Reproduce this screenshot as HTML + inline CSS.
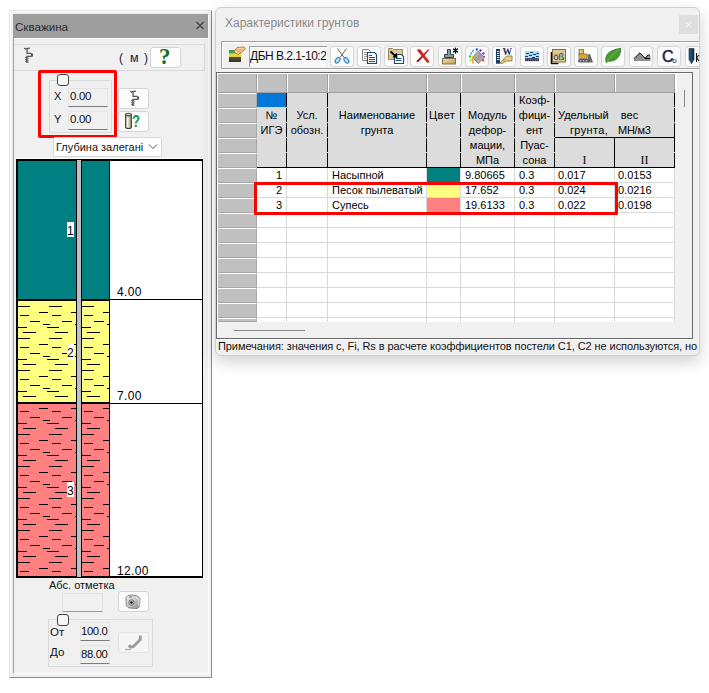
<!DOCTYPE html>
<html><head><meta charset="utf-8">
<style>
*{box-sizing:border-box;margin:0;padding:0}
html,body{width:709px;height:693px;overflow:hidden;background:#fff}
body{position:relative;font-family:"Liberation Sans",sans-serif;font-size:11px;color:#000}
.a{position:absolute}
.t{position:absolute;white-space:nowrap;line-height:13px}
.hd{position:absolute;height:15px;line-height:15px;text-align:center;white-space:nowrap;font-size:11px;color:#000}
.dt{position:absolute;height:15px;line-height:15px;white-space:nowrap;font-size:11px;color:#000}
.vb{width:1px;background:repeating-linear-gradient(to bottom,#000 0,#000 14px,transparent 14px,transparent 15px)}
</style></head><body>

<!-- ============ LEFT PANEL ============ -->
<div class="a" style="left:9px;top:10px;width:203px;height:668px;background:#f0f0f0;border-left:1px solid #e3e3e3;border-top:1px solid #e3e3e3;border-right:1px solid #8c8c8c;border-bottom:1px solid #8c8c8c"></div>
<div class="a" style="left:10px;top:11px;width:201px;height:666px;border-left:1px solid #fff;border-top:1px solid #fff"></div>
<div class="a" style="left:13px;top:14px;width:196px;height:660px;border-left:1px solid #a0a0a0;border-top:1px solid #a0a0a0;border-right:1px solid #fff;border-bottom:1px solid #fff"></div>
<!-- title bar -->
<div class="a" style="left:13px;top:14px;width:195px;height:24px;background:#9e9e9e"></div>
<div class="t" style="left:15px;top:20px;font-size:11.6px;color:#2a2a2a">Скважина</div>
<svg class="a" style="left:194px;top:20px" width="12" height="11" viewBox="194 20 12 11"><path d="M196.5 22 L203.5 29 M203.5 22 L196.5 29" stroke="#404040" stroke-width="1.15"/></svg>

<!-- top strip -->
<div class="a" style="left:14px;top:38px;width:194px;height:1px;background:#fafafa"></div>
<!-- icon section -->
<div class="a" style="left:14px;top:44px;width:191px;height:27px;border:1px solid #dadada;border-left:none"></div>
<svg class="a" style="left:23px;top:46px" width="12" height="18" viewBox="0 0 12 18">
 <path d="M1.2 2.1 L3.2 3.6 M3 2.7 L7 2.2 M4.1 2.6 V7.4 H8.3 M3.4 10.4 H8.6 M3.8 10.4 V17" stroke="#585858" stroke-width="1.3" fill="none"/>
 <path d="M9 7.4 V10.4" stroke="#444" stroke-width="1.8"/>
 <path d="M2.2 11.2 L5.6 12.3 M2.2 13.2 L5.6 14.3 M2.2 15.2 L5.6 16.3" stroke="#585858" stroke-width="1.2"/>
</svg>
<div class="t" style="left:119px;top:52px;font-size:12px;color:#1a1a3a">(</div><div class="t" style="left:130px;top:52px;font-size:12.5px;color:#1a1a3a">м</div><div class="t" style="left:144px;top:52px;font-size:12px;color:#1a1a3a">)</div>
<div class="a" style="left:150px;top:47px;width:31px;height:21px;background:#fdfdfd;border:1px solid #d4d4d4;border-radius:3px"></div>
<div class="t" style="left:159px;top:45px;font-family:'Liberation Serif',serif;font-weight:bold;font-size:23px;color:#1f6e24;line-height:23px">?</div>

<!-- XY group (red) -->
<div class="a" style="left:49px;top:80px;width:63px;height:53px;border:1px solid #dadada"></div>
<div class="a" style="left:57px;top:74px;width:12px;height:12px;border:1px solid #444;border-radius:3px;background:#f6f6f6"></div>
<div class="t" style="left:54px;top:90px;font-size:11px;color:#111">X</div>
<div class="a" style="left:68px;top:88px;width:40px;height:19px;background:#f0f0f0;border:1px solid #e4e4e4;border-bottom:1px solid #7a7a7a"></div>
<div class="t" style="left:70px;top:90px;font-size:11.5px;letter-spacing:-0.3px;color:#111">0.00</div>
<div class="t" style="left:54px;top:113px;font-size:11px;color:#111">Y</div>
<div class="a" style="left:68px;top:111px;width:40px;height:19px;background:#f0f0f0;border:1px solid #e4e4e4;border-bottom:1px solid #7a7a7a"></div>
<div class="t" style="left:70px;top:113px;font-size:11.5px;letter-spacing:-0.3px;color:#111">0.00</div>
<div class="a" style="left:38px;top:70px;width:79px;height:68px;border:3px solid #ff0000;border-radius:2px"></div>

<!-- drill button -->
<div class="a" style="left:118px;top:88px;width:31px;height:21px;background:#fbfbfb;border:1px solid #d4d4d4;border-radius:3px"></div>
<svg class="a" style="left:129px;top:89px" width="12" height="18" viewBox="0 0 12 18">
 <path d="M1.2 2.1 L3.2 3.6 M3 2.7 L7 2.2 M4.1 2.6 V7.4 H8.3 M3.4 10.4 H8.6 M3.8 10.4 V17" stroke="#585858" stroke-width="1.3" fill="none"/>
 <path d="M9 7.4 V10.4" stroke="#444" stroke-width="1.8"/>
 <path d="M2.2 11.2 L5.6 12.3 M2.2 13.2 L5.6 14.3 M2.2 15.2 L5.6 16.3" stroke="#585858" stroke-width="1.2"/>
</svg>
<!-- cylinder ? button -->
<div class="a" style="left:118px;top:111px;width:31px;height:21px;background:#fbfbfb;border:1px solid #d4d4d4;border-radius:3px"></div>
<svg class="a" style="left:118px;top:108px" width="20" height="24" viewBox="118 108 20 24">
 <defs><linearGradient id="cyl" x1="0" x2="1"><stop offset="0" stop-color="#d8d2c0"/><stop offset="0.35" stop-color="#f4f0e0"/><stop offset="1" stop-color="#9a9488"/></linearGradient></defs>
 <path d="M125.6 114.8 V127.2 A2.85 1.3 0 0 0 131.3 127.2 V114.8" fill="url(#cyl)" stroke="#4a4242" stroke-width="1.2"/>
 <ellipse cx="128.45" cy="114.6" rx="2.85" ry="1.3" fill="#e8e2d2" stroke="#4a4242" stroke-width="1.1"/>
</svg>
<div class="t" style="left:132px;top:113px;font-size:16px;font-weight:bold;color:#17963e;line-height:17px;transform:scaleX(0.82);transform-origin:0 0">?</div>

<!-- dropdown -->
<div class="a" style="left:53px;top:137px;width:109px;height:20px;background:#fff;border:1px solid #d9d9d9;border-radius:2px"></div>
<div class="t" style="left:56px;top:141px;font-size:11px;color:#111">Глубина залегані</div>
<svg class="a" style="left:148px;top:144px" width="10" height="6" viewBox="0 0 10 6"><path d="M1 0.5 L5 4.5 L9 0.5" stroke="#555" stroke-width="1" fill="none"/></svg>

<!-- chart -->
<div class="a" style="left:16px;top:158px;width:188px;height:1px;background:#fff"></div>
<svg class="a" style="left:16px;top:159px" width="188" height="420" viewBox="16 159 188 420" shape-rendering="crispEdges">
 <defs>
  <pattern id="hatch" patternUnits="userSpaceOnUse" x="0" y="0" width="32" height="32">
   <rect x="17" y="18" width="13" height="1" fill="#000"/>
   <rect x="7" y="24" width="9" height="1" fill="#000"/>
   <rect x="20" y="27" width="9" height="1" fill="#000"/>
   <rect x="30" y="1" width="2" height="1" fill="#000"/>
   <rect x="0" y="1" width="8" height="1" fill="#000"/>
   <rect x="11" y="4" width="7" height="1" fill="#000"/>
   <rect x="15" y="7" width="12" height="1" fill="#000"/>
   <rect x="23" y="12" width="9" height="1" fill="#000"/>
   <rect x="0" y="12" width="4" height="1" fill="#000"/>
  </pattern>
 </defs>
 <rect x="16" y="159" width="187" height="419" fill="#000"/>
 <rect x="18" y="161" width="184" height="415" fill="#fff"/>
 <!-- layer 1 -->
 <rect x="18" y="161" width="91" height="138" fill="#008080"/>
 <!-- layer 2 -->
 <rect x="18" y="301" width="91" height="101" fill="#ffff80"/>
 <rect x="18" y="301" width="91" height="101" fill="url(#hatch)"/>
 <!-- layer 3 -->
 <rect x="18" y="404" width="91" height="172" fill="#ff8080"/>
 <rect x="18" y="404" width="91" height="172" fill="url(#hatch)"/>
 <!-- boundaries -->
 <rect x="18" y="299" width="91" height="2" fill="#000"/>
 <rect x="109" y="299" width="93" height="1" fill="#000"/>
 <rect x="18" y="402" width="91" height="2" fill="#000"/>
 <rect x="109" y="403" width="93" height="1" fill="#000"/>
 <!-- right black edge of columns -->
 <rect x="109" y="161" width="1" height="415" fill="#000"/>
 <!-- core -->
 <rect x="76" y="160" width="6" height="417" fill="#000"/>
 <rect x="77" y="160" width="4" height="417" fill="#c0c0c0"/>
 <!-- labels -->
 <rect x="67" y="222" width="7" height="15" fill="#fff"/>
 <rect x="67" y="344" width="7" height="15" fill="#fff"/>
 <rect x="67" y="482" width="7" height="15" fill="#fff"/>
</svg>
<div class="t" style="left:67px;top:225px;font-size:12px;color:#000">1</div>
<div class="t" style="left:67px;top:347px;font-size:12px;color:#000">2</div>
<div class="t" style="left:67px;top:485px;font-size:12px;color:#000">3</div>
<div class="t" style="left:117px;top:286px;font-size:12px;letter-spacing:0.35px;color:#000">4.00</div>
<div class="t" style="left:117px;top:390px;font-size:12px;letter-spacing:0.35px;color:#000">7.00</div>
<div class="t" style="left:117px;top:565px;font-size:12px;letter-spacing:0.35px;color:#000">12.00</div>

<!-- bottom controls -->
<div class="t" style="left:49px;top:579px;font-size:11px;color:#111">Абс. отметка</div>
<div class="a" style="left:62px;top:593px;width:41px;height:19px;background:#f0f0f0;border:1px solid #e2e2e2;border-bottom:1px solid #9a9a9a"></div>
<div class="a" style="left:118px;top:591px;width:31px;height:21px;background:#fbfbfb;border:1px solid #d4d4d4;border-radius:3px"></div>
<svg class="a" style="left:122px;top:592px" width="22" height="19" viewBox="122 592 22 19">
 <defs><linearGradient id="camg" x1="0" y1="0" x2="1" y2="1"><stop offset="0" stop-color="#f4f4f4"/><stop offset="0.5" stop-color="#c8c8c8"/><stop offset="1" stop-color="#8a8a8a"/></linearGradient></defs>
 <path d="M126 597.5 L128 595.5 L132 595 L137.5 596 L140 598.5 L139.5 606.5 L137 608.5 L129 608 L126.3 605.5 Z" fill="url(#camg)" stroke="#7a7a7a" stroke-width="0.9"/>
 <path d="M136 597 L139 599 V606" stroke="#fff" stroke-width="0.8" fill="none"/>
 <rect x="129" y="596" width="3" height="2" fill="#a8a8a8"/>
 <circle cx="131.5" cy="602.5" r="2.7" fill="#dcdcdc" stroke="#5a5a5a" stroke-width="0.9"/>
 <circle cx="131.5" cy="602.5" r="1.3" fill="#111"/>
</svg>
<div class="a" style="left:48px;top:619px;width:105px;height:48px;border:1px solid #dadada"></div>
<div class="a" style="left:57px;top:614px;width:12px;height:12px;border:1px solid #444;border-radius:3px;background:#f6f6f6"></div>
<div class="t" style="left:50px;top:626px;font-size:11.5px;color:#111">От</div>
<div class="a" style="left:80px;top:622px;width:30px;height:19px;background:#f0f0f0;border:1px solid #e4e4e4;border-bottom:1px solid #7a7a7a"></div>
<div class="t" style="left:81px;top:625px;font-size:11.3px;color:#111;letter-spacing:-0.35px;width:28px;overflow:hidden">100.0</div>
<div class="t" style="left:50px;top:646px;font-size:11.5px;color:#111">До</div>
<div class="a" style="left:80px;top:645px;width:30px;height:19px;background:#f0f0f0;border:1px solid #e4e4e4;border-bottom:1px solid #7a7a7a"></div>
<div class="t" style="left:81px;top:648px;font-size:11.3px;color:#111;letter-spacing:-0.35px;width:28px;overflow:hidden">88.00</div>
<div class="a" style="left:118px;top:632px;width:31px;height:21px;background:#f5f5f5;border:1px solid #e4e4e4;border-radius:3px"></div>
<svg class="a" style="left:122px;top:633px" width="22" height="19" viewBox="122 633 22 19">
 <path d="M140.3 635.5 V639.5 L133.5 646.5 L130.5 647 L128.8 645.2" stroke="#9c9c9c" stroke-width="2.8" fill="none" stroke-linejoin="round"/>
 <path d="M125 649.5 H131 M126 648.5 V650.5 M128 648.5 V650.5 M130 648.5 V650.5" stroke="#a8a8a8" stroke-width="0.8"/>
</svg>

<!-- ============ RIGHT WINDOW ============ -->
<div class="a" style="left:215px;top:7px;width:485px;height:349px;background:#f0f0f0;border:1px solid #cfcfcf;border-radius:6px;box-shadow:0 6px 16px rgba(0,0,0,0.18)"></div>
<div class="t" style="left:225px;top:16px;font-size:12px;color:#8a8a8a;line-height:14px">Характеристики грунтов</div>
<div class="a" style="left:679px;top:15px;width:19px;height:19px;background:#dedede"></div>
<svg class="a" style="left:684px;top:20px" width="9" height="9" viewBox="684 20 9 9"><path d="M686 22.3 L691 27.3 M691 22.3 L686 27.3" stroke="#fbfbfb" stroke-width="1"/></svg>
<!-- toolbar -->
<div class="a" style="left:221px;top:41px;width:478px;height:28px;border-top:1px solid #a0a0a0;border-left:1px solid #a0a0a0;border-bottom:1px solid #a0a0a0;box-shadow:inset 1px 1px 0 #fff"></div>
<div class="a" style="left:221px;top:69px;width:478px;height:1px;background:#fff"></div>
<svg class="a" style="left:221px;top:41px" width="478" height="28" viewBox="221 41 478 28">
 <defs>
  <linearGradient id="gTan" x1="0" y1="0" x2="1" y2="1"><stop offset="0" stop-color="#f0e4a8"/><stop offset="1" stop-color="#b89a60"/></linearGradient>
  <linearGradient id="gGrey" x1="0" y1="0" x2="1" y2="1"><stop offset="0" stop-color="#d8d8d8"/><stop offset="0.5" stop-color="#9a9a9a"/><stop offset="1" stop-color="#cfcfcf"/></linearGradient>
  <linearGradient id="gPin" x1="0" x2="1"><stop offset="0" stop-color="#2a5f80"/><stop offset="1" stop-color="#123048"/></linearGradient>
  <linearGradient id="gLayer" x1="0" y1="0" x2="0" y2="1"><stop offset="0" stop-color="#2f9a60"/><stop offset="0.28" stop-color="#3aa860"/><stop offset="0.3" stop-color="#e8e040"/><stop offset="0.6" stop-color="#d8d030"/><stop offset="0.62" stop-color="#5a4a3e"/><stop offset="1" stop-color="#3a2e28"/></linearGradient>
 </defs>
 <!-- layer icon -->
 <rect x="229" y="50" width="12" height="12" fill="url(#gLayer)"/>
 <path d="M234 52 L237 47.5 L244 47 L245.5 49 L241 52.5 L238 54.5 Z" fill="#f6d6b0" stroke="#d6781e" stroke-width="1"/>
 <path d="M236 50 L243 49.5 M237 52 L241 51" stroke="#d6781e" stroke-width="0.6"/>
 <!-- buttons -->
 <g fill="#fcfcfc" stroke="#d4d4d4" stroke-width="1">
  <rect x="330.5" y="46.5" width="23" height="20" rx="3"/>
  <rect x="357.5" y="46.5" width="23" height="20" rx="3"/>
  <rect x="384.5" y="46.5" width="23" height="20" rx="3"/>
  <rect x="410.5" y="46.5" width="23" height="20" rx="3"/>
  <rect x="438.5" y="46.5" width="23" height="20" rx="3"/>
  <rect x="465.5" y="46.5" width="23" height="20" rx="3"/>
  <rect x="492.5" y="46.5" width="23" height="20" rx="3"/>
  <rect x="520.5" y="46.5" width="23" height="20" rx="3"/>
  <rect x="547.5" y="46.5" width="23" height="20" rx="3"/>
  <rect x="574.5" y="46.5" width="23" height="20" rx="3"/>
  <rect x="601.5" y="46.5" width="23" height="20" rx="3"/>
  <rect x="629.5" y="46.5" width="23" height="20" rx="3"/>
  <rect x="657.5" y="46.5" width="23" height="20" rx="3"/>
  <rect x="685.5" y="46.5" width="23" height="20" rx="3"/>
 </g>
 <!-- 1 scissors -->
 <path d="M337.5 48.5 L344 57.5 M346.5 48.5 L340 57.5" stroke="#606060" stroke-width="1"/>
 <ellipse cx="337.6" cy="60.3" rx="1.9" ry="3" transform="rotate(38 337.6 60.3)" fill="#cfe8f6" stroke="#3a8fc4" stroke-width="1.3"/>
 <ellipse cx="346.4" cy="60.3" rx="1.9" ry="3" transform="rotate(-38 346.4 60.3)" fill="#cfe8f6" stroke="#3a8fc4" stroke-width="1.3"/>
 <!-- 2 copy -->
 <path d="M362.5 49.5 H368.5 L370.5 51.5 V60.5 H362.5 Z" fill="#f4f4f4" stroke="#888" stroke-width="1"/>
 <path d="M364 52.5 H367 M364 54.5 H367 M364 56.5 H367 M364 58.5 H366" stroke="#aaa" stroke-width="1"/>
 <path d="M367.5 52.5 H374.5 L376.5 54.5 V63.5 H367.5 Z" fill="#fff" stroke="#1f4e79" stroke-width="1.2"/>
 <path d="M369 55.5 H372 M369 57.5 H375 M369 59.5 H375 M369 61.5 H375" stroke="#1f4e79" stroke-width="1"/>
 <!-- 3 paste -->
 <path d="M388.5 48.5 H392.5 L393.5 49.5 H402.5 V59.5 H388.5 Z" fill="#dccb98" stroke="#9c8450" stroke-width="1"/>
 <path d="M394.5 54.5 H401.5 L403.5 56.5 V63.5 H394.5 Z" fill="#fff" stroke="#1f4e79" stroke-width="1.2"/>
 <path d="M396 58.5 H401.5 M396 60.5 H401.5" stroke="#1f4e79" stroke-width="1"/>
 <path d="M390.5 51.5 L395.5 56" stroke="#000" stroke-width="1.8"/>
 <path d="M397.5 58 L392.5 57.3 L397 52.8 Z" fill="#000"/>
 <!-- 4 red X -->
 <path d="M417 49.5 L420.5 49.5 L429.5 62.5 L427 62.5 Z" fill="#c81a1a"/>
 <path d="M429.5 49.5 L428 49.5 L416 61.5 L418.5 62 Z" fill="#a51212"/>
 <path d="M418 50 L428.5 62" stroke="#e02020" stroke-width="2.2"/>
 <!-- 5 stamp -->
 <path d="M447.5 49.5 H450.5 V54.5 H453.5 V57.5 H444.5 V54.5 H447.5 Z" fill="#8e9e9c" stroke="#1f4466" stroke-width="1"/>
 <rect x="442.5" y="58.5" width="13" height="5.5" fill="url(#gTan)" stroke="#8a6a40" stroke-width="1"/>
 <path d="M455.5 48 V53 M453.4 49 L457.6 52 M457.6 49 L453.4 52" stroke="#000" stroke-width="1.25" stroke-linecap="round"/>
 <!-- 6 color wheel -->
 <circle cx="473" cy="50.8" r="1.15" fill="#3ab0e8"/>
 <circle cx="471" cy="53.5" r="1.15" fill="#60b0c8"/>
 <circle cx="476.8" cy="49.5" r="1.15" fill="#1a3ee0"/>
 <circle cx="480.5" cy="50.5" r="1.15" fill="#5a20a8"/>
 <circle cx="483.3" cy="53.5" r="1.15" fill="#7a18b0"/>
 <circle cx="484" cy="56.8" r="1.15" fill="#c020c8"/>
 <circle cx="483.3" cy="60.3" r="1.15" fill="#f01018"/>
 <circle cx="470" cy="56.5" r="1.15" fill="#10c818"/>
 <circle cx="470.7" cy="60" r="1.15" fill="#80f020"/>
 <path d="M478.2 51 L484.3 57.5 L478.2 63.5 L472.3 57.5 Z" fill="url(#gGrey)" stroke="#6a6a6a" stroke-width="0.8"/>
 <path d="M472.8 63.5 V57.8 L475.5 55.8" stroke="#f5a020" stroke-width="1.5" fill="none"/>
 <!-- 7 ruler W hand -->
 <rect x="496" y="49" width="4" height="14.7" fill="#1d3f5e"/>
 <path d="M497 51.5 H499.5 M497 53.5 H499.5 M497 55.5 H499.5 M497 57.5 H499.5 M497 59.5 H499.5" stroke="#d8e8f4" stroke-width="1"/>
 <text x="502.6" y="55" font-family="Liberation Serif" font-weight="bold" font-size="9.5" fill="#22305a">W</text>
 <path d="M500 63 L505 57.5 L506.5 56 H512 V61 H506.5 L502 63.5 Z" fill="#e6d090" stroke="#9a7a3a" stroke-width="0.9"/>
 <path d="M502 61.5 L505 59 M503.5 62 L506.5 59.5" stroke="#b09050" stroke-width="0.6"/>
 <!-- 8 water -->
 <rect x="525" y="51" width="14" height="7.3" fill="#a8dcf8"/>
 <path d="M526 53.5 H529 M530 52.5 H533 M533 54.5 H536 M536.5 53.5 H539 M529 55.5 H532 M525 56.5 H528 M536 56.5 H539 M532 57.5 H535" stroke="#16385a" stroke-width="1"/>
 <rect x="525" y="58.2" width="14" height="1.3" fill="#2a2444"/>
 <circle cx="526.00" cy="60.2" r="0.95" fill="#2a2444"/><circle cx="527.75" cy="60.2" r="0.95" fill="#2a2444"/><circle cx="529.50" cy="60.2" r="0.95" fill="#2a2444"/><circle cx="531.25" cy="60.2" r="0.95" fill="#2a2444"/><circle cx="533.00" cy="60.2" r="0.95" fill="#2a2444"/><circle cx="534.75" cy="60.2" r="0.95" fill="#2a2444"/><circle cx="536.50" cy="60.2" r="0.95" fill="#2a2444"/><circle cx="538.25" cy="60.2" r="0.95" fill="#2a2444"/>
 <!-- 9 oB -->
 <path d="M551.5 52 V63.5 H558.5" stroke="#0a0a20" stroke-width="1.6" fill="none"/>
 <rect x="552.5" y="49.5" width="13" height="12.5" fill="#dccb98" stroke="#8c6a3a" stroke-width="1"/>
 <text x="553.3" y="60.3" font-family="Liberation Sans" font-size="9.5" fill="#1e2a50">öß</text>
 <!-- 10 bulldozer -->
 <rect x="579" y="49.5" width="4.5" height="6" fill="#e8a820" stroke="#555" stroke-width="0.6"/>
 <rect x="580" y="50.5" width="1.6" height="2.5" fill="#cde"/>
 <rect x="579" y="54" width="8" height="4.5" fill="#e8a820" stroke="#555" stroke-width="0.6"/>
 <path d="M587.5 54.5 L590 54 L593 62.5 H588 Z" fill="#666"/>
 <rect x="578" y="59" width="11.5" height="3.6" rx="1.7" fill="#5a5e66"/>
 <circle cx="580.5" cy="60.8" r="0.8" fill="#bbb"/><circle cx="583.5" cy="60.8" r="0.8" fill="#bbb"/><circle cx="586.5" cy="60.8" r="0.8" fill="#bbb"/>
 <!-- 11 leaf -->
 <path d="M606.3 62.8 C604 56 608 50 620.8 48.3 C621 56 616.5 62 608.2 61.2 Z" fill="#4a9a34" stroke="#2e7520" stroke-width="0.7"/>
 <path d="M607 62 C610 57 613 54 619 49.5" stroke="#76c050" stroke-width="0.7" fill="none"/>
 <!-- 12 mountain -->
 <path d="M634 58.8 L640 53 L645 58 L648 55 L650.5 56 V61 H634 Z" fill="#909090"/>
 <path d="M633.8 58.8 L640 52.8 L645 58.3 L648.3 54.8 L650 55.6 M645 58.5 H650" stroke="#000" stroke-width="1" fill="none"/>
 <!-- 13 Co -->
 <text x="662" y="62" font-family="Liberation Sans" font-size="16" fill="#1a2448" stroke="#1a2448" stroke-width="0.5">C</text>
 <text x="672.3" y="62.7" font-family="Liberation Sans" font-size="8" fill="#1a2448">o</text>
 <!-- 14 pin -->
 <path d="M689 48.5 H694 V59.5 L691.5 63.8 L689 59.5 Z" fill="url(#gPin)" stroke="#0e2a40" stroke-width="0.6"/>
 <path d="M696.5 53 V62 M696.5 58 L699 55 M697 58 L699 61" stroke="#111" stroke-width="1.1"/>
</svg>

<!-- input -->
<div class="a" style="left:249px;top:46px;width:78px;height:21px;background:#f7f7f7;border-left:1px solid #a0a0a0;border-top:1px solid #a0a0a0"></div>
<div class="t" style="left:250px;top:49px;font-size:12px;color:#111;letter-spacing:-0.5px;line-height:14px;width:76px;overflow:hidden">ДБН В.2.1-10:2</div>
<!-- grid frame -->
<div class="a" style="left:216px;top:72px;width:477px;height:267px;background:#f0f0f0;border:1px solid #696969"></div>
<div class="a" style="left:217px;top:73px;width:475px;height:1px;background:#fff"></div>
<div class="a" style="left:217px;top:73px;width:1px;height:265px;background:#fff"></div>
<div class="a" style="left:218px;top:74px;width:39px;height:19px;background:#c0c0c0;border-bottom:1px solid #a0a0a0;border-right:1px solid #a0a0a0"></div>
<div class="a" style="left:257px;top:74px;width:30px;height:19px;background:#c0c0c0;border-bottom:1px solid #a0a0a0;border-right:1px solid #a0a0a0"></div>
<div class="a" style="left:257px;top:74px;width:1px;height:18px;background:#fff"></div>
<div class="a" style="left:287px;top:74px;width:41px;height:19px;background:#c0c0c0;border-bottom:1px solid #a0a0a0;border-right:1px solid #a0a0a0"></div>
<div class="a" style="left:287px;top:74px;width:1px;height:18px;background:#fff"></div>
<div class="a" style="left:328px;top:74px;width:99px;height:19px;background:#c0c0c0;border-bottom:1px solid #a0a0a0;border-right:1px solid #a0a0a0"></div>
<div class="a" style="left:328px;top:74px;width:1px;height:18px;background:#fff"></div>
<div class="a" style="left:427px;top:74px;width:34px;height:19px;background:#c0c0c0;border-bottom:1px solid #a0a0a0;border-right:1px solid #a0a0a0"></div>
<div class="a" style="left:427px;top:74px;width:1px;height:18px;background:#fff"></div>
<div class="a" style="left:461px;top:74px;width:54px;height:19px;background:#c0c0c0;border-bottom:1px solid #a0a0a0;border-right:1px solid #a0a0a0"></div>
<div class="a" style="left:461px;top:74px;width:1px;height:18px;background:#fff"></div>
<div class="a" style="left:515px;top:74px;width:40px;height:19px;background:#c0c0c0;border-bottom:1px solid #a0a0a0;border-right:1px solid #a0a0a0"></div>
<div class="a" style="left:515px;top:74px;width:1px;height:18px;background:#fff"></div>
<div class="a" style="left:555px;top:74px;width:60px;height:19px;background:#c0c0c0;border-bottom:1px solid #a0a0a0;border-right:1px solid #a0a0a0"></div>
<div class="a" style="left:555px;top:74px;width:1px;height:18px;background:#fff"></div>
<div class="a" style="left:615px;top:74px;width:60px;height:19px;background:#c0c0c0;border-bottom:1px solid #a0a0a0;border-right:1px solid #a0a0a0"></div>
<div class="a" style="left:615px;top:74px;width:1px;height:18px;background:#fff"></div>
<div class="a" style="left:218px;top:93px;width:39px;height:15px;background:#c0c0c0;border-top:1px solid #fff;border-bottom:1px solid #a8a8a8;border-right:1px solid #a8a8a8"></div>
<div class="a" style="left:218px;top:108px;width:39px;height:15px;background:#c0c0c0;border-top:1px solid #fff;border-bottom:1px solid #a8a8a8;border-right:1px solid #a8a8a8"></div>
<div class="a" style="left:218px;top:123px;width:39px;height:15px;background:#c0c0c0;border-top:1px solid #fff;border-bottom:1px solid #a8a8a8;border-right:1px solid #a8a8a8"></div>
<div class="a" style="left:218px;top:138px;width:39px;height:15px;background:#c0c0c0;border-top:1px solid #fff;border-bottom:1px solid #a8a8a8;border-right:1px solid #a8a8a8"></div>
<div class="a" style="left:218px;top:153px;width:39px;height:15px;background:#c0c0c0;border-top:1px solid #fff;border-bottom:1px solid #a8a8a8;border-right:1px solid #a8a8a8"></div>
<div class="a" style="left:218px;top:168px;width:39px;height:15px;background:#c0c0c0;border-top:1px solid #fff;border-bottom:1px solid #a8a8a8;border-right:1px solid #a8a8a8"></div>
<div class="a" style="left:218px;top:183px;width:39px;height:15px;background:#c0c0c0;border-top:1px solid #fff;border-bottom:1px solid #a8a8a8;border-right:1px solid #a8a8a8"></div>
<div class="a" style="left:218px;top:198px;width:39px;height:15px;background:#c0c0c0;border-top:1px solid #fff;border-bottom:1px solid #a8a8a8;border-right:1px solid #a8a8a8"></div>
<div class="a" style="left:218px;top:213px;width:39px;height:15px;background:#c0c0c0;border-top:1px solid #fff;border-bottom:1px solid #a8a8a8;border-right:1px solid #a8a8a8"></div>
<div class="a" style="left:218px;top:228px;width:39px;height:15px;background:#c0c0c0;border-top:1px solid #fff;border-bottom:1px solid #a8a8a8;border-right:1px solid #a8a8a8"></div>
<div class="a" style="left:218px;top:243px;width:39px;height:15px;background:#c0c0c0;border-top:1px solid #fff;border-bottom:1px solid #a8a8a8;border-right:1px solid #a8a8a8"></div>
<div class="a" style="left:218px;top:258px;width:39px;height:15px;background:#c0c0c0;border-top:1px solid #fff;border-bottom:1px solid #a8a8a8;border-right:1px solid #a8a8a8"></div>
<div class="a" style="left:218px;top:273px;width:39px;height:15px;background:#c0c0c0;border-top:1px solid #fff;border-bottom:1px solid #a8a8a8;border-right:1px solid #a8a8a8"></div>
<div class="a" style="left:218px;top:288px;width:39px;height:15px;background:#c0c0c0;border-top:1px solid #fff;border-bottom:1px solid #a8a8a8;border-right:1px solid #a8a8a8"></div>
<div class="a" style="left:218px;top:303px;width:39px;height:15px;background:#c0c0c0;border-top:1px solid #fff;border-bottom:1px solid #a8a8a8;border-right:1px solid #a8a8a8"></div>
<div class="a" style="left:218px;top:318px;width:39px;height:4px;background:#c0c0c0;border-top:1px solid #fff;border-bottom:1px solid #a8a8a8;border-right:1px solid #a8a8a8"></div>
<div class="a" style="left:257px;top:93px;width:418px;height:75px;background:#dcdcdc"></div>
<div class="a" style="left:257px;top:93px;width:29px;height:14px;background:#0078d7"></div>
<div class="a vb" style="left:286px;top:93px;height:75px"></div>
<div class="a vb" style="left:327px;top:93px;height:75px"></div>
<div class="a vb" style="left:426px;top:93px;height:75px"></div>
<div class="a vb" style="left:460px;top:93px;height:75px"></div>
<div class="a vb" style="left:514px;top:93px;height:75px"></div>
<div class="a vb" style="left:554px;top:93px;height:75px"></div>
<div class="a vb" style="left:674px;top:93px;height:75px"></div>
<div class="a vb" style="left:614px;top:138px;height:30px;background:#000"></div>
<div class="a" style="left:555px;top:137px;width:120px;height:1px;background:#000"></div>
<div class="a" style="left:257px;top:167px;width:418px;height:1px;background:#000"></div>
<div class="a" style="left:257px;top:168px;width:418px;height:154px;background:#fff"></div>
<div class="a" style="left:257px;top:182px;width:418px;height:1px;background:#d9d9d9"></div>
<div class="a" style="left:257px;top:197px;width:418px;height:1px;background:#d9d9d9"></div>
<div class="a" style="left:257px;top:212px;width:418px;height:1px;background:#d9d9d9"></div>
<div class="a" style="left:257px;top:227px;width:418px;height:1px;background:#d9d9d9"></div>
<div class="a" style="left:257px;top:242px;width:418px;height:1px;background:#d9d9d9"></div>
<div class="a" style="left:257px;top:257px;width:418px;height:1px;background:#d9d9d9"></div>
<div class="a" style="left:257px;top:272px;width:418px;height:1px;background:#d9d9d9"></div>
<div class="a" style="left:257px;top:287px;width:418px;height:1px;background:#d9d9d9"></div>
<div class="a" style="left:257px;top:302px;width:418px;height:1px;background:#d9d9d9"></div>
<div class="a" style="left:257px;top:317px;width:418px;height:1px;background:#d9d9d9"></div>
<div class="a" style="left:286px;top:168px;width:1px;height:154px;background:#d9d9d9"></div>
<div class="a" style="left:327px;top:168px;width:1px;height:154px;background:#d9d9d9"></div>
<div class="a" style="left:426px;top:168px;width:1px;height:154px;background:#d9d9d9"></div>
<div class="a" style="left:460px;top:168px;width:1px;height:154px;background:#d9d9d9"></div>
<div class="a" style="left:514px;top:168px;width:1px;height:154px;background:#d9d9d9"></div>
<div class="a" style="left:554px;top:168px;width:1px;height:154px;background:#d9d9d9"></div>
<div class="a" style="left:674px;top:168px;width:1px;height:154px;background:#d9d9d9"></div>
<div class="a" style="left:614px;top:168px;width:1px;height:154px;background:#d9d9d9"></div>
<div class="hd" style="left:257px;top:108px;width:29px;">№</div>
<div class="hd" style="left:257px;top:123px;width:29px;">ИГЭ</div>
<div class="hd" style="left:287px;top:108px;width:40px;">Усл.</div>
<div class="hd" style="left:287px;top:123px;width:40px;">обозн.</div>
<div class="hd" style="left:328px;top:108px;width:98px;">Наименование</div>
<div class="hd" style="left:328px;top:123px;width:98px;">грунта</div>
<div class="hd" style="left:429px;top:108px;text-align:left;letter-spacing:0.4px">Цвет</div>
<div class="hd" style="left:461px;top:108px;width:53px;">Модуль</div>
<div class="hd" style="left:461px;top:123px;width:53px;">дефор-</div>
<div class="hd" style="left:461px;top:138px;width:53px;">мации,</div>
<div class="hd" style="left:461px;top:153px;width:53px;">МПа</div>
<div class="hd" style="left:515px;top:93px;width:39px;">Коэф-</div>
<div class="hd" style="left:515px;top:108px;width:39px;">фици-</div>
<div class="hd" style="left:515px;top:123px;width:39px;">ент</div>
<div class="hd" style="left:515px;top:138px;width:39px;">Пуас-</div>
<div class="hd" style="left:515px;top:153px;width:39px;">сона</div>
<div class="hd" style="left:555px;top:108px;width:119px;text-align:left;padding-left:3px">Удельный&nbsp;&nbsp;&nbsp;&nbsp;вес</div>
<div class="hd" style="left:570px;top:123px;text-align:left;letter-spacing:0.35px">грунта,</div><div class="hd" style="left:618px;top:123px;text-align:left;letter-spacing:-0.25px">МН/м3</div>
<div class="hd" style="left:555px;top:153px;width:59px;font-family:'Liberation Serif',serif;font-size:12px">I</div>
<div class="hd" style="left:615px;top:153px;width:59px;font-family:'Liberation Serif',serif;font-size:12px">II</div>
<div class="a" style="left:427px;top:168px;width:33px;height:14px;background:#008080"></div>
<div class="dt" style="left:257px;top:168px;width:25px;text-align:right">1</div>
<div class="dt" style="left:332px;top:168px">Насыпной</div>
<div class="dt dn" style="left:465px;top:168px">9.80665</div>
<div class="dt dn" style="left:519px;top:168px">0.3</div>
<div class="dt dn" style="left:558px;top:168px">0.017</div>
<div class="dt dn" style="left:618px;top:168px">0.0153</div>
<div class="a" style="left:427px;top:183px;width:33px;height:14px;background:#ffff80"></div>
<div class="dt" style="left:257px;top:183px;width:25px;text-align:right">2</div>
<div class="dt" style="left:332px;top:183px">Песок пылеватый</div>
<div class="dt dn" style="left:465px;top:183px">17.652</div>
<div class="dt dn" style="left:519px;top:183px">0.3</div>
<div class="dt dn" style="left:558px;top:183px">0.024</div>
<div class="dt dn" style="left:618px;top:183px">0.0216</div>
<div class="a" style="left:427px;top:198px;width:33px;height:14px;background:#ff8080"></div>
<div class="dt" style="left:257px;top:198px;width:25px;text-align:right">3</div>
<div class="dt" style="left:332px;top:198px">Супесь</div>
<div class="dt dn" style="left:465px;top:198px">19.6133</div>
<div class="dt dn" style="left:519px;top:198px">0.3</div>
<div class="dt dn" style="left:558px;top:198px">0.022</div>
<div class="dt dn" style="left:618px;top:198px">0.0198</div>
<div class="a" style="left:254px;top:182px;width:364px;height:33px;border:3px solid #ff0000;border-radius:1px"></div>
<!-- scrollbars -->
<div class="a" style="left:675px;top:74px;width:2px;height:18px;background:#fff"></div>
<div class="a" style="left:684px;top:90px;width:1px;height:17px;background:#8a8a8a"></div>
<div class="a" style="left:234px;top:330px;width:71px;height:1px;background:#8a8a8a"></div>
<div class="a" style="left:216px;top:339px;width:477px;height:1px;background:#fff"></div>
<div class="t" style="left:218px;top:340px;font-size:11px;color:#111;letter-spacing:-0.075px;line-height:13px">Примечания: значения с, Fi, Rs в расчете коэффициентов постели C1, C2 не используются, но</div>


</body></html>
